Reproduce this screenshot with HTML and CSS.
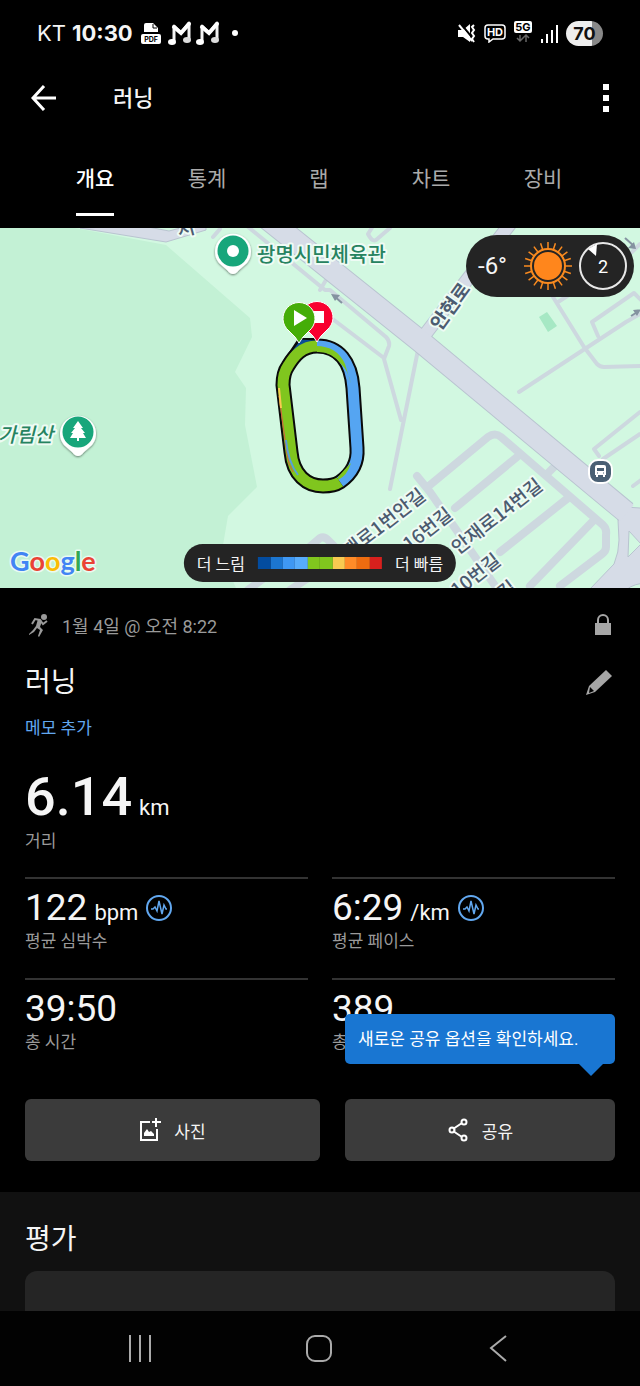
FILE: index.html
```html
<!DOCTYPE html>
<html lang="ko">
<head>
    <meta charset="UTF-8">
    <meta name="viewport" content="width=device-width, initial-scale=1">
    <title>러닝</title>
    <link rel="stylesheet" href="styles.css">
</head>
<body>
    <div class="status-bar">
        <div class="status-left">
            <span class="carrier">KT</span>
            <span class="clock">10:30</span>
            <svg class="pdf-icon" width="20" height="21" viewBox="0 0 20 21">
                <path d="M3 9V2q0-2 2-2h7l5 5v4z" fill="#fff"/>
                <path d="M12 1v4h4" fill="none" stroke="#000" stroke-width="1"/>
                <rect y="11" width="20" height="10" rx="2" fill="#fff"/>
                <text x="10" y="19" text-anchor="middle" class="pdf-text">PDF</text>
            </svg>
            <svg width="24" height="26" viewBox="0 0 24 26">
                <path d="M6 21V6l7 7 8-10v16" fill="none" stroke="#f2f2f2" stroke-width="3" stroke-linejoin="round"/>
                <path d="M6 7l7 6 8-9" fill="none" stroke="#fff" stroke-width="4" stroke-linecap="round"/>
                <ellipse cx="4" cy="22" rx="4" ry="3" fill="#fff"/><ellipse cx="19" cy="20" rx="4" ry="3" fill="#ddd"/>
            </svg>
            <svg width="24" height="26" viewBox="0 0 24 26">
                <path d="M6 21V6l7 7 8-10v16" fill="none" stroke="#f2f2f2" stroke-width="3" stroke-linejoin="round"/>
                <path d="M6 7l7 6 8-9" fill="none" stroke="#fff" stroke-width="4" stroke-linecap="round"/>
                <ellipse cx="4" cy="22" rx="4" ry="3" fill="#fff"/><ellipse cx="19" cy="20" rx="4" ry="3" fill="#ddd"/>
            </svg>
            <span class="dot"></span>
        </div>
        <div class="status-right">
            <svg width="18" height="19" viewBox="0 0 18 19">
                <path d="M0 6h5l7-6v18l-7-5H0z" fill="#fff"/>
                <path d="M3 0l14 17" stroke="#000" stroke-width="2"/>
                <path d="M1 1l13 16" stroke="#fff" stroke-width="2"/>
                <path d="M16 1l-2 2 2 3-2 3 2 3-2 3 2 3" fill="none" stroke="#fff" stroke-width="2"/>
            </svg>
            <svg width="22" height="19" viewBox="0 0 22 19">
                <path d="M4 1h14q3 0 3 3v8q0 3-3 3h-9l-4 3v-3H4q-3 0-3-3V4q0-3 3-3z" fill="none" stroke="#fff" stroke-width="1.5"/>
                <text x="11" y="12" text-anchor="middle" class="hd-text">HD</text>
            </svg>
            <svg width="18" height="24" viewBox="0 0 18 24">
                <rect width="18" height="12" rx="2" fill="#fff"/>
                <text x="9" y="10" text-anchor="middle" class="net-text">5G</text>
                <path d="M6 14v6M3 17l3 3 3-3M12 21v-6M9 17l3-3 3 3" fill="none" stroke="#666" stroke-width="1.5"/>
            </svg>
            <svg width="18" height="19" viewBox="0 0 18 19">
                <path d="M2 15v4M7 10v9M12 6v13M17 1v18" stroke="#fff" stroke-width="2"/>
            </svg>
            <span class="battery">70</span>
        </div>
    </div>

    <header class="app-bar">
        <button class="icon-button" aria-label="뒤로">
            <svg width="26" height="26" viewBox="0 0 26 26">
                <path d="M13 1L2 13l11 12M2 13h23" fill="none" stroke="#fff" stroke-width="3"/>
            </svg>
        </button>
        <span class="app-title">러닝</span>
        <button class="icon-button" aria-label="더보기">
            <svg width="6" height="30" viewBox="0 0 6 30">
                <path d="M0 1h6v6H0zM0 12h6v6H0zM0 23h6v6H0z" fill="#fff"/>
            </svg>
        </button>
    </header>

    <nav class="tabs">
        <a href="#" class="tab active">개요</a>
        <a href="#" class="tab">통계</a>
        <a href="#" class="tab">랩</a>
        <a href="#" class="tab">차트</a>
        <a href="#" class="tab">장비</a>
    </nav>

    <div class="map">
        <svg class="map-canvas" viewBox="0 228 640 360" preserveAspectRatio="xMidYMid slice">
            <defs>
                <filter id="shadow" x="-30%" y="-30%" width="160%" height="160%">
                    <feDropShadow dx="0" dy="1" stdDeviation="1" flood-opacity="0.5"/>
                </filter>
            </defs>
            <rect y="228" width="640" height="360" fill="#d2f8e1"/>
            <path d="M0 228h75l91 17 84 73 2 19-17 35 11 16-1 37 12 62-29 29-5 29 5 25 8 18H0z" fill="#c3f1d5"/>

            <!-- side lanes -->
            <g class="lane">
                <path d="M213 237l7-8M247 226l78 64h5l56 47q4 4 3 9l-5 13 17 61M326 314l58 44M418 350l-28 139"/>
                <path d="M390 228l-14 12q-4 2-8-6l5-8M553 297l31 50 13 17q3 3 7 3l36-1M519 392l107-70 14-8M598 336l-6-14 42-29 8 8M558 302l14-9"/>
                <path d="M640 412l-46 37 5 7M603 459l37-25M633 486l8-6M632 252l8-8M320 290l6-10"/>
            </g>
            <g class="street">
                <path d="M417 476l13 16 68 98M430 485l58-48q7-5 13 0l102 88q4 4 3 10v12q0 4-4 7l-42 32M455 508l62-51M500 552l68-54M530 586l64-66M546 475l10-10"/>
                <path d="M306 550l14-12q4-2 8 2l22 22M248 590l32-24M290 590l42-28"/>
            </g>

            <!-- main roads -->
            <path d="M80 228l86 14 40-12v-3h-22l-15 4-26-5z" fill="#d6dce7" stroke="#b9c4d0"/>
            <path d="M611 506q6 6 7 14l1 20q0 12-5 24l-25 26h37q8-7 22-7v-75h-8z" fill="#d6dce7" stroke="#b9c4d0"/>
            <g fill="none">
                <path d="M420 341l97-126" stroke="#b9c4d0" stroke-width="14"/>
                <path d="M264 216L420 341l77 64 129 107" stroke="#b9c4d0" stroke-width="23"/>
                <path d="M420 341l97-126" stroke="#d6dce7" stroke-width="12"/>
                <path d="M264 216L420 341l77 64 130 108" stroke="#d6dce7" stroke-width="21"/>
            </g>
            <path d="M629 531l12 13-13 13z" fill="#d2f8e1" stroke="#b9c4d0"/>
            <path d="M539 317l8-5 10 14-9 6z" fill="#a6e8c4"/>
            <g fill="none" stroke="#8492a0" stroke-width="2">
                <path d="M342 303l-8-7"/><path d="M625 238l9 8"/><path d="M631 316l8-5"/>
            </g>
            <path d="M331 294l9 1-5 6zM636 249l-8-1 6-6zM641 309l-4 7-4-6z" fill="#8492a0"/>

            <!-- street names -->
            <g class="street-name">
                <text transform="translate(471 289) rotate(-54)" text-anchor="end" class="road-name">안현로</text>
                <text transform="translate(427 498) rotate(-38)" text-anchor="end">재로1번안길</text>
                <text transform="translate(454 517) rotate(-38)" text-anchor="end">16번길</text>
                <text transform="translate(544 488) rotate(-38)" text-anchor="end">안재로14번길</text>
                <text transform="translate(502 563) rotate(-38)" text-anchor="end">10번길</text>
                <text transform="translate(518 590) rotate(-38)" text-anchor="end">길</text>
                <text transform="translate(196 233) rotate(-15)" text-anchor="end">서</text>
            </g>
            <text x="257" y="262" class="place">광명시민체육관</text>
            <text x="-2" y="442" class="place italic">가림산</text>

            <!-- place pins -->
            <g filter="url(#shadow)" fill="#fff">
                <path d="M233 274q-3 0-6-4l-8-7a18 18 0 1 1 28 0l-8 7q-3 4-6 4z"/>
                <path d="M78 456q-3 0-6-4l-8-7a18 18 0 1 1 28 0l-8 7q-3 4-6 4z"/>
            </g>
            <circle cx="233" cy="251" r="15.500" fill="#18a67b"/><circle cx="233" cy="251" r="6" fill="#fff"/>
            <circle cx="78" cy="432" r="15.500" fill="#18a67b"/>
            <path d="M78 421l5 7h-2l4 5h-2l3 5h-7v3h-2v-3h-7l3-5h-2l4-5h-2z" fill="#fff"/>
            <rect x="589" y="460" width="23" height="23" rx="9" fill="#4a6074" stroke="#fff" stroke-width="2"/>
            <path d="M597 465h7q2 0 2 2v8h-1v2h-2v-2h-5v2h-2v-2h-1v-8q0-2 2-2z" fill="#fff"/>
            <path d="M597 468h7v3h-7z" fill="#4a6074"/>
            <path d="M597 473h1M603 473h1" stroke="#4a6074"/>

            <!-- running track -->
            <g fill="none">
                <path d="M286 362l14-21h14l10 6" stroke="#0a0a0a" stroke-width="6"/>
                <path class="track-edge" d="M317 346C302 346 294 356 288 366Q283 373 283 385L291 452C293 475 307 486 323 486Q334 486 340 482C353 473 358 462 357 448L353 388C351 362 339 346 317 346z"/>
                <path d="M289 360l13-18 12 1 10 3" stroke="#0b4d96" stroke-width="5"/>
                <path class="track blue" d="M340 482C353 473 358 462 357 448L353 388C351 362 339 346 317 346"/>
                <path class="track green" d="M317 346C302 346 294 356 288 366Q283 373 283 385L291 452C293 475 307 486 323 486Q334 486 340 482"/>
                <path d="M316 346q21 0 29 18l6 20q-3-14-10-20-10-13-24-12z" fill="#80c61e"/>
                <path d="M338 480q9-4 13-17-6 6-13 14z" fill="#80c61e"/>
                <path d="M279 396l8 58q1 10 6 18" stroke="#d85a42" stroke-width="1"/>
                <path d="M279 388l2 20" stroke="#f8ca51" stroke-width="2"/>
                <path d="M286 440q2 22 12 35" stroke="#57a0d8" stroke-width="2"/>
            </g>
            <path d="M317 342q-3-6-10-12a16 16 0 1 1 20 0q-7 6-10 12z" fill="#f8002e" stroke="#fff"/>
            <path d="M312 311h12v12h-12z" fill="#fff"/>
            <path d="M299 343q-3-6-10-12a16 16 0 1 1 20 0q-7 6-10 12z" fill="#45ad08" stroke="#fff"/>
            <path d="M294 310l13 8-13 8z" fill="#fff"/>

            <text x="10" y="571" class="google"><tspan fill="#4285f4">G</tspan><tspan fill="#ea4335">o</tspan><tspan fill="#fbbc05">o</tspan><tspan fill="#4285f4">g</tspan><tspan fill="#34a853">l</tspan><tspan fill="#ea4335">e</tspan></text>
        </svg>

        <div class="weather">
            <span class="temperature">-6°</span>
            <svg width="48" height="48" viewBox="-24 -24 48 48">
                <g stroke="#f98a1f" stroke-width="1.500">
                    <path id="rays" d="M0-24V-16M0 24V16M-24 0H-16M24 0H16"/>
                    <use href="#rays" transform="rotate(18)"/>
                    <use href="#rays" transform="rotate(36)"/>
                    <use href="#rays" transform="rotate(54)"/>
                    <use href="#rays" transform="rotate(72)"/>
                </g>
                <circle r="17" fill="#242424" stroke="#f98a1f" stroke-width="2"/>
                <circle r="14" fill="#ff861c"/>
            </svg>
            <svg width="48" height="48" viewBox="-24 -24 48 48">
                <circle r="23" fill="none" stroke="#e8e8e8" stroke-width="2"/>
                <path d="M-15-17L-6-22-7-10z" fill="#fff"/>
                <text y="7" text-anchor="middle" class="wind">2</text>
            </svg>
        </div>

        <div class="legend">
            <span>더 느림</span>
            <div class="legend-colors">
                <i class="c1"></i><i class="c2"></i><i class="c3"></i><i class="c4"></i><i class="c5"></i><i class="c5"></i><i class="c6"></i><i class="c7"></i><i class="c8"></i><i class="c9"></i>
            </div>
            <span>더 빠름</span>
        </div>
    </div>

    <main class="summary">
        <div class="row date-row">
            <div class="date">
                <svg width="25" height="24" viewBox="0 0 25 24">
                    <circle cx="19" cy="4" r="3" fill="#9a9a9a"/>
                    <path d="M7 11l3-5 5 1 3 4 4-3" fill="none" stroke="#9a9a9a" stroke-width="2"/>
                    <path d="M11 13l2-7 4 2-2 6 3 3-4 7-1-1 2-6-3-2-3 4-5 3v-1l4-4z" fill="#9a9a9a"/>
                </svg>
                <span>1월 4일 @ 오전 8:22</span>
            </div>
            <svg class="lock" width="18" height="22" viewBox="0 0 18 22">
                <path d="M4 10V6a5 5 0 0 1 10 0v4" fill="none" stroke="#a6a6a6" stroke-width="2"/>
                <path d="M1 9h16v12H1z" fill="#a6a6a6"/>
            </svg>
        </div>
        <div class="row title-row">
            <h1>러닝</h1>
            <button class="icon-button" aria-label="이름 수정">
                <svg width="30" height="28" viewBox="0 0 30 28">
                    <path d="M21 1l6 6-17 16-9 3 3-9z" fill="#a6a6a6"/>
                    <path d="M5 18l4 4-5 2z" fill="#000"/>
                </svg>
            </button>
        </div>
        <a href="#" class="note-link">메모 추가</a>

        <div class="distance">
            <div class="distance-line"><span class="distance-value">6.14</span><span class="unit">km</span></div>
            <div class="label">거리</div>
        </div>

        <div class="stats">
            <div class="stat">
                <div class="stat-line">
                    <span class="value">122</span><span class="unit">bpm</span>
                    <svg class="pulse" width="28" height="28" viewBox="0 0 28 28">
                        <circle cx="14" cy="14" r="12" stroke-width="2"/>
                        <path d="M6 15h2l2-2 2 4 2-10 3 13 2-9 2 4h1"/>
                    </svg>
                </div>
                <div class="label">평균 심박수</div>
            </div>
            <div class="stat">
                <div class="stat-line">
                    <span class="value">6:29</span><span class="unit">/km</span>
                    <svg class="pulse" width="28" height="28" viewBox="0 0 28 28">
                        <circle cx="14" cy="14" r="12" stroke-width="2"/>
                        <path d="M6 15h2l2-2 2 4 2-10 3 13 2-9 2 4h1"/>
                    </svg>
                </div>
                <div class="label">평균 페이스</div>
            </div>
            <div class="stat">
                <div class="stat-line"><span class="value">39:50</span></div>
                <div class="label">총 시간</div>
            </div>
            <div class="stat">
                <div class="stat-line"><span class="value">389</span></div>
                <div class="label">총 칼로리</div>
            </div>
        </div>

        <div class="actions">
            <div class="action photo">
                <button class="action-button">
                    <svg width="22" height="24" viewBox="0 0 22 24">
                        <path d="M11 4H2v18h16V11" fill="none" stroke="#fff" stroke-width="2"/>
                        <path d="M17 0v9M13 4h9" stroke="#fff" stroke-width="2"/>
                        <path d="M5 18v-3l3-4 2 3 2-1 3 3v2z" fill="#fff"/>
                    </svg>
                    사진
                </button>
            </div>
            <div class="action share">
                <div class="tooltip">새로운 공유 옵션을 확인하세요.</div>
                <button class="action-button">
                    <svg width="22" height="24" viewBox="0 0 22 24">
                        <g fill="none" stroke="#fff" stroke-width="2">
                            <path d="M6 11l9-6M6 13l9 6"/>
                            <circle cx="5" cy="12" r="2.500"/><circle cx="17" cy="4" r="2.500"/><circle cx="17" cy="20" r="2.500"/>
                        </g>
                    </svg>
                    공유
                </button>
            </div>
        </div>
    </main>

    <section class="rating">
        <h2>평가</h2>
        <div class="rating-card"></div>
    </section>

    <div class="system-nav">
        <button class="icon-button" aria-label="최근 앱">
            <svg width="26" height="30" viewBox="0 0 26 30">
                <path d="M3 1v27M13 1v27M23 1v27" stroke="#aaa" stroke-width="2"/>
            </svg>
        </button>
        <button class="icon-button" aria-label="홈">
            <svg width="26" height="30" viewBox="0 0 26 30">
                <rect x="1" y="2" width="24" height="25" rx="8" fill="none" stroke="#aaa" stroke-width="2"/>
            </svg>
        </button>
        <button class="icon-button" aria-label="이전">
            <svg width="26" height="30" viewBox="0 0 26 30">
                <path d="M21 2L6 14l15 13" fill="none" stroke="#aaa" stroke-width="2"/>
            </svg>
        </button>
    </div>
</body>
</html>
```

FILE: styles.css
```css
* {
    box-sizing: border-box;
}

body {
    margin: 0;
    min-height: 100vh;
    display: flex;
    flex-direction: column;
    background: #000;
    color: #f5f5f5;
    font-family: Roboto, "Noto Sans CJK KR", sans-serif;
}

svg {
    display: block;
    flex-shrink: 0;
}

a {
    text-decoration: none;
}

button {
    font-family: inherit;
    color: inherit;
    border: none;
    cursor: pointer;
}

.icon-button {
    background: none;
    padding: 0;
}

/* Status bar */
.status-bar {
    display: flex;
    justify-content: space-between;
    align-items: center;
    height: 66px;
    padding: 0 37px;
    font-family: Inter, "Noto Sans CJK KR", sans-serif;
    font-size: 22px;
}

.status-left,
.status-right {
    display: flex;
    align-items: center;
    gap: 8px;
}

.status-left {
    gap: 4px;
}

.carrier {
    margin-right: 2px;
}

.clock {
    font-weight: 700;
    margin-right: 4px;
}

.pdf-icon {
    margin-right: 3px;
}

.pdf-text {
    font: 700 7px Inter, sans-serif;
}

.hd-text {
    font: 700 11px Inter, sans-serif;
    fill: #fff;
}

.net-text {
    font: 700 11px Inter, sans-serif;
}

.dot {
    width: 6px;
    height: 6px;
    margin-left: 8px;
    border-radius: 50%;
    background: #fff;
}

.battery {
    width: 37px;
    height: 25px;
    line-height: 25px;
    border-radius: 13px;
    background: linear-gradient(90deg, #eee 70%, #888 70%);
    color: #111;
    font-size: 18px;
    font-weight: 700;
    text-align: center;
}

/* App bar */
.app-bar {
    display: flex;
    align-items: center;
    height: 64px;
    padding: 0 31px;
}

.app-title {
    flex: 1;
    margin-left: 56px;
    padding-bottom: 4px;
    font-size: 22px;
    font-weight: 500;
}

.tabs {
    display: grid;
    grid-template-columns: repeat(5, 1fr);
    justify-items: center;
    height: 98px;
    padding: 12px 41px 12px 39px;
}

.tab {
    padding: 22px 0 19px;
    line-height: 30px;
    font-size: 21px;
    color: #aaa;
}

.tab.active {
    color: #fff;
    font-weight: 500;
    border-bottom: 3px solid #fff;
}

/* Map */
.map {
    position: relative;
    height: 360px;
    overflow: hidden;
}

.map-canvas {
    width: 100%;
    height: 100%;
}

.lane,
.street {
    fill: none;
    stroke: #cdd8df;
    stroke-width: 4;
    stroke-linecap: round;
    stroke-linejoin: round;
}

.street {
    stroke-width: 8;
}

.street-name,
.place {
    font-family: "Noto Sans CJK KR", sans-serif;
    font-weight: 500;
    font-size: 19px;
    fill: #4c5b70;
    stroke: #eefbf4;
    stroke-width: 4px;
    stroke-linejoin: round;
    paint-order: stroke;
}

.road-name {
    font-weight: 700;
}

.place {
    font-size: 20px;
    fill: #268360;
}

.italic {
    font-style: italic;
}

.track-edge {
    stroke: #0a0a0a;
    stroke-width: 15;
}

.track {
    stroke-width: 11;
}

.green {
    stroke: #80c61e;
}

.blue {
    stroke: #55a5f2;
}

.google {
    font-family: Lato, sans-serif;
    font-size: 27px;
    font-weight: 700;
    stroke: #e9fbf1;
    stroke-width: 3px;
    stroke-linejoin: round;
    paint-order: stroke;
}

.weather {
    position: absolute;
    top: 7px;
    right: 6px;
    display: flex;
    align-items: center;
    gap: 7px;
    height: 62px;
    padding: 0 7px 0 12px;
    border-radius: 31px;
    background: #242424;
}

.temperature {
    width: 39px;
    font-size: 24px;
}

.wind {
    font-size: 18px;
    fill: #fff;
}

.legend {
    position: absolute;
    bottom: 6px;
    left: 50%;
    transform: translateX(-50%);
    display: flex;
    align-items: center;
    gap: 13px;
    height: 38px;
    padding: 0 13px;
    border-radius: 19px;
    background: #242424;
    font-size: 16px;
    white-space: nowrap;
}

.legend-colors {
    display: flex;
    width: 124px;
    height: 12px;
}

.legend-colors i {
    flex: 1;
}

.c1 { background: #034c9f; }
.c2 { background: #1c76d0; }
.c3 { background: #3f98f3; }
.c4 { background: #57acfb; }
.c5 { background: #80c61e; }
.c6 { background: #f8ca51; }
.c7 { background: #ff8b28; }
.c8 { background: #ee6c10; }
.c9 { background: #d8201d; }

/* Summary */
.summary {
    padding: 21px 25px 31px;
}

.row {
    display: flex;
    justify-content: space-between;
    align-items: center;
}

.date-row {
    height: 32px;
    color: #9a9a9a;
    font-size: 18px;
}

.date {
    display: flex;
    align-items: center;
    gap: 12px;
}

.lock {
    margin-right: 3px;
}

.title-row {
    height: 40px;
    margin-top: 22px;
}

h1,
h2 {
    margin: 0;
    font-size: 28px;
    font-weight: 400;
    line-height: 42px;
}

.note-link {
    display: block;
    margin-top: 13px;
    line-height: 24px;
    font-size: 17px;
    color: #62a8f0;
}

.distance {
    margin-top: 25px;
}

.distance-line {
    display: flex;
    align-items: baseline;
    gap: 7px;
}

.distance-value {
    font-size: 54px;
    font-weight: 500;
    line-height: 64px;
}

.unit {
    font-size: 22px;
}

.label {
    line-height: 24px;
    font-size: 17px;
    color: #9a9a9a;
}

.stats {
    display: grid;
    grid-template-columns: 1fr 1fr;
    column-gap: 24px;
    margin-top: 24px;
}

.stat {
    height: 101px;
    padding-top: 7px;
    border-top: 2px solid #333;
}

.stat-line {
    display: flex;
    align-items: baseline;
    gap: 7px;
    height: 43px;
    line-height: 43px;
}

.value {
    font-size: 37px;
}

.pulse {
    align-self: center;
    fill: none;
    stroke: #62a8f0;
    stroke-width: 1.5;
}

.actions {
    display: flex;
    gap: 25px;
    margin-top: 20px;
}

.action {
    position: relative;
}

.photo {
    flex: 295;
}

.share {
    flex: 270;
}

.action-button {
    display: flex;
    align-items: center;
    justify-content: center;
    gap: 13px;
    width: 100%;
    height: 62px;
    border-radius: 6px;
    background: #3b3b3b;
    font-size: 17px;
    font-weight: 400;
}

.tooltip {
    position: absolute;
    left: 0;
    right: 0;
    bottom: calc(100% + 35px);
    padding: 0 13px;
    line-height: 50px;
    border-radius: 5px;
    background: #1976d2;
    color: #fff;
    font-size: 17px;
    white-space: nowrap;
}

.tooltip::after {
    content: '';
    position: absolute;
    top: 100%;
    right: 12px;
    border: 12px solid transparent;
    border-top-color: #1976d2;
    border-bottom: none;
}

/* Rating */
.rating {
    flex: 1;
    display: flex;
    flex-direction: column;
    gap: 10px;
    padding: 27px 25px 0;
    background: #111;
}

.rating-card {
    flex: 1;
    min-height: 40px;
    border-radius: 12px 12px 0 0;
    background: #252525;
}

.system-nav {
    display: flex;
    justify-content: space-between;
    align-items: center;
    height: 75px;
    padding: 0 129px 0 127px;
    background: #020202;
}
```
